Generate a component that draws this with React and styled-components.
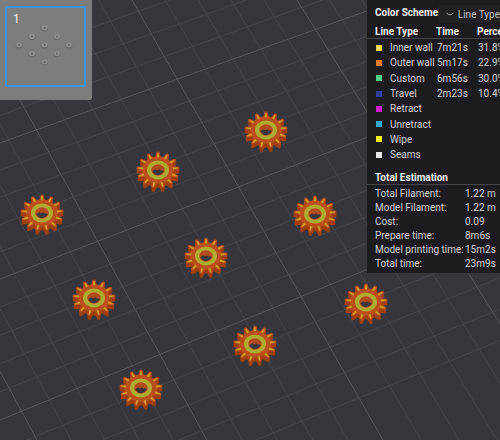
import styled, { createGlobalStyle } from "styled-components";

const GlobalStyle = createGlobalStyle`
  html, body {
    margin: 0;
    padding: 0;
    background: #37363d;
  }
`;

const Stage = styled.div`
  position: relative;
  width: 500px;
  height: 440px;
  overflow: hidden;
  background: #37363d;
  font-family: Roboto, "Liberation Sans", sans-serif;
`;

const Scene = styled.svg`
  display: block;
`;

const Thumb = styled.div`
  position: absolute;
  left: 0;
  top: 0;
  width: 92px;
  height: 100px;
  background: #7d7d7e;
  border-bottom-right-radius: 2px;
`;

const ThumbFrame = styled.div`
  box-sizing: border-box;
  position: relative;
  margin: 6px 0 0 5px;
  width: 81px;
  height: 81px;
  padding: 4px 0 0 6px;
  border: 2px solid #3a94e4;
  border-radius: 2px;
  color: #f2f2f2;
  font-size: 12px;
  line-height: 14px;
`;

const ThumbGears = styled.svg`
  position: absolute;
  left: 0;
  top: 0;
`;

const Panel = styled.div`
  position: absolute;
  left: 367px;
  top: 0;
  width: 133px;
  height: 273px;
  background: #1c1c1e;
  color: #d2d2d2;
  font-size: 10px;
  line-height: 15px;
  white-space: nowrap;
  overflow: hidden;
`;

const SchemeBar = styled.div`
  display: flex;
  height: 24px;
  padding-top: 5px;
  box-sizing: border-box;
`;

const Title = styled.div`
  color: #f0f0f0;
  font-weight: 700;
  padding-left: 8px;
  width: 68px;
`;

const Select = styled.div`
  flex: 1;
  display: flex;
  align-items: center;
  gap: 4px;
  height: 18px;
  padding-left: 7px;
  border-radius: 2px 0 0 2px;
  background: #212123;
  color: #c0c0c0;
`;

const HeaderRow = styled.div`
  display: grid;
  grid-template-columns: 61px 41px 40px;
  padding: 0 0 0 8px;
  height: 14px;
  color: #efefef;
  font-weight: 700;
  border-bottom: 1px solid #454547;
`;

const Rows = styled.div`
  padding-top: 1px;
`;

const Row = styled.div`
  display: grid;
  grid-template-columns: 14px 47px 41px 40px;
  align-items: center;
  height: 15.3px;
  padding-left: 9px;
`;

const Swatch = styled.span`
  width: 6px;
  height: 6px;
  background: ${(p) => p.$color};
`;

const Section = styled.div`
  margin: 8px 0 0;
  padding: 0 0 0 8px;
  height: 14px;
  color: #f0f0f0;
  font-weight: 700;
  border-bottom: 1px solid #454547;
`;

const Stats = styled.div`
  padding: 2px 0 0 8px;
`;

const Stat = styled.div`
  display: grid;
  grid-template-columns: 90px 1fr;
  height: 14px;
  line-height: 14px;
`;

const lineTypes = [
  ["#f5dc45", "Inner wall", "7m21s", "31.8%"],
  ["#f2792c", "Outer wall", "5m17s", "22.9%"],
  ["#52cf8d", "Custom", "6m56s", "30.0%"],
  ["#2f3f9b", "Travel", "2m23s", "10.4%"],
  ["#d21fd2", "Retract"],
  ["#33a9cf", "Unretract"],
  ["#f7f00e", "Wipe"],
  ["#e8e8e8", "Seams"],
];

const stats = [
  ["Total Filament:", "1.22 m"],
  ["Model Filament:", "1.22 m"],
  ["Cost:", "0.09"],
  ["Prepare time:", "8m6s"],
  ["Model printing time:", "15m2s"],
  ["Total time:", "23m9s"],
];

// gear centres as seen on the plate
const gears = [
  [266, 130],
  [158, 170],
  [42, 213],
  [315, 214],
  [206, 256],
  [94, 298],
  [366, 302],
  [255, 344],
  [141, 388],
];

const thumbGears = [
  [44.7, 28],
  [32, 36.5],
  [57, 36.5],
  [19, 45],
  [44.7, 45],
  [69, 45],
  [32, 53.7],
  [57, 53.7],
  [44.7, 62],
];

const lerp = (a, b, t) => a + (b - a) * t;

// major plate lines: x at y=0 / x at y=440
const majorsA = [
  [-200, 37],
  [-35, 207],
  [132, 383],
  [297, 573],
  [459, 768],
];
// major plate lines: y at x=0 / y at x=500
const majorsB = [
  [5, -170],
  [143, -37],
  [279, 86],
  [420, 215],
  [575, 372],
];

const plateLines = () => {
  const out = [];
  for (let i = 0; i < 4; i++) {
    for (let j = 0; j < 5; j++) {
      const t = j / 5;
      const major = j === 0;
      const a0 = lerp(majorsA[i][0], majorsA[i + 1][0], t);
      const a1 = lerp(majorsA[i][1], majorsA[i + 1][1], t);
      const b0 = lerp(majorsB[i][0], majorsB[i + 1][0], t);
      const b1 = lerp(majorsB[i][1], majorsB[i + 1][1], t);
      out.push({ x1: a0, y1: 0, x2: a1, y2: 440, major });
      out.push({ x1: 0, y1: b0, x2: 500, y2: b1, major });
    }
  }
  return out;
};

const TEETH = 13;
const SQUASH = 0.85;

const pt = (r, a) =>
  `${(r * Math.cos(a)).toFixed(2)} ${(r * SQUASH * Math.sin(a)).toFixed(2)}`;

const gearOutline = () => {
  const step = (Math.PI * 2) / TEETH;
  let d = "";
  for (let i = 0; i < TEETH; i++) {
    const a = i * step - Math.PI / 2;
    d += `${i ? "L" : "M"}${pt(16, a - step * 0.32)}`;
    d += `L${pt(21.5, a - step * 0.13)}L${pt(21.5, a + step * 0.13)}`;
    d += `L${pt(16, a + step * 0.32)}`;
  }
  return d + "Z";
};

const toothMarks = () => {
  const step = (Math.PI * 2) / TEETH;
  let d = "";
  for (let i = 0; i < TEETH; i++) {
    const a = i * step - Math.PI / 2;
    d += `M${pt(15, a - step * 0.16)}L${pt(20, a - step * 0.06)}L${pt(20, a + step * 0.06)}L${pt(15, a + step * 0.16)}Z`;
  }
  return d;
};

const GearShape = ({ id }) => {
  const outline = gearOutline();
  return (
    <g id={id} filter="url(#soft)">
      <path d={outline} fill="#9c3f10" transform="translate(0 4)" />
      <path d={outline} fill="#9c3f10" transform="translate(0 2)" />
      <path d={outline} fill="#bb4f1a" />
      <path d={toothMarks()} fill="#cfa02c" />
      <ellipse rx="11" ry="9.4" fill="#aeaa30" />
      <ellipse rx="6.8" ry="5.8" fill="#b44c1e" />
      <path d="M-5.6 1.6Q-3 -2 -1 0.6Q1 -1.4 2.5 0.6Q4.5 -0.4 5.7 1.6Q3 5.2 0 5.2Q-3 5.2 -5.6 1.6Z" fill="#37343b" />
    </g>
  );
};

export default function App() {
  return (
    <Stage>
      <GlobalStyle />
      <Scene width="500" height="440" viewBox="0 0 500 440">
        <defs>
          <filter id="soft" x="-20%" y="-20%" width="140%" height="140%">
            <feGaussianBlur stdDeviation="0.35" />
          </filter>
          <GearShape id="gear" />
        </defs>
        {plateLines().map((l, i) => (
          <line
            key={i}
            x1={l.x1}
            y1={l.y1}
            x2={l.x2}
            y2={l.y2}
            stroke={l.major ? "#56565b" : "#45454b"}
            strokeWidth="1"
          />
        ))}
        {gears.map(([x, y]) => (
          <use key={`${x}-${y}`} href="#gear" x={x} y={y} />
        ))}
      </Scene>

      <Thumb>
        <ThumbGears width="92" height="100" viewBox="0 0 92 100">
          {thumbGears.map(([x, y]) => (
            <g key={`${x}-${y}`}>
              <ellipse cx={x} cy={y + 0.8} rx="3.4" ry="2.8" fill="#6c6c6d" />
              <ellipse cx={x} cy={y} rx="3" ry="2.4" fill="#8c8c8d" />
              <ellipse cx={x} cy={y} rx="1" ry="0.9" fill="#666667" />
            </g>
          ))}
        </ThumbGears>
        <ThumbFrame>1</ThumbFrame>
      </Thumb>

      <Panel>
        <SchemeBar>
          <Title>Color Scheme</Title>
          <Select>
            <svg width="8" height="5" viewBox="0 0 8 5">
              <path d="M0.5 1Q4 4.5 7.5 1" fill="none" stroke="#a8a8a8" strokeWidth="1" />
            </svg>
            Line Type
          </Select>
        </SchemeBar>
        <HeaderRow>
          <span>Line Type</span>
          <span>Time</span>
          <span>Percent</span>
        </HeaderRow>
        <Rows>
          {lineTypes.map(([color, name, time, pct]) => (
            <Row key={name}>
              <Swatch $color={color} />
              <span>{name}</span>
              <span>{time}</span>
              <span>{pct}</span>
            </Row>
          ))}
        </Rows>
        <Section>Total Estimation</Section>
        <Stats>
          {stats.map(([k, v]) => (
            <Stat key={k}>
              <span>{k}</span>
              <span>{v}</span>
            </Stat>
          ))}
        </Stats>
      </Panel>
    </Stage>
  );
}
